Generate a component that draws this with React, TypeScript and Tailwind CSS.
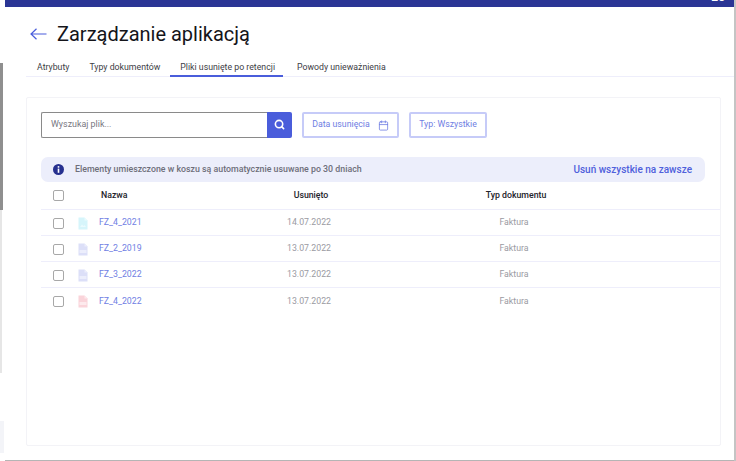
import React from "react";
import { Search, Calendar } from "lucide-react";

const rows = [
  { name: "FZ_4_2021", date: "14.07.2022", color: "#d6f5fb", mark: "#eafbfe", label: "" },
  { name: "FZ_2_2019", date: "13.07.2022", color: "#dcdff8", mark: "#eceefc", label: "ZIP" },
  { name: "FZ_3_2022", date: "13.07.2022", color: "#dcdff8", mark: "#eceefc", label: "ZIP" },
  { name: "FZ_4_2022", date: "13.07.2022", color: "#fad4da", mark: "#fdeaed", label: "PDF" },
];

function FileIcon({ color, mark, label }: { color: string; mark: string; label: string }) {
  return (
    <svg width="10" height="13" viewBox="0 0 10 13" className="block shrink-0">
      <path d="M0.5 0.5H6.5L9.5 3.5V12.5H0.5Z" fill={color} />
      <path d="M6.5 0.5L9.5 3.5H6.5Z" fill={mark} />
      {label === "" ? <path d="M2 10L4 7.5L5.5 9L6.5 8L8 10Z" fill={mark} /> : <rect x="1.5" y="7" width="7" height="3" fill={mark} />}
    </svg>
  );
}

function Checkbox() {
  return <span className="block h-[11px] w-[11px] rounded-[2px] border border-[#a8a8a8] bg-white" />;
}

export default function App() {
  return (
    <div className="flex h-[461px] w-[736px] overflow-hidden bg-white font-['Roboto',sans-serif]">
      <div className="flex w-[5px] shrink-0 flex-col bg-white">
        <div className="h-[63px]" />
        <div className="h-[147px] w-[3px] bg-[#8f8f8f]" />
        <div className="h-[163px] w-[2px] bg-[#e6e6e6]" />
        <div className="h-[48px]" />
        <div className="h-[32px] w-[4px] bg-[#f3f4f8]" />
      </div>
      <div className="flex min-w-0 flex-1 flex-col border-b border-[#b5b5b5]">
        <div className="flex h-[6.5px] shrink-0 justify-end overflow-hidden bg-[#2b3595] pr-[9px]">
          <span className="mt-[-10px] text-[12px] leading-[14px] font-medium text-white">20</span>
        </div>
        <div className="flex h-[40px] shrink-0 items-end pl-[25px]">
          <svg width="17" height="12" viewBox="0 0 17 12" fill="none" stroke="#4a5ddb" strokeWidth="1.2" className="mb-[7px] shrink-0">
            <path d="M16.5 6H1M6.5 0.7L1 6L6.5 11.3" />
          </svg>
          <h1 className="ml-[10px] text-[20px] leading-[26px] font-normal text-[#15151a]">Zarządzanie aplikacją</h1>
        </div>
        <div className="ml-[21px] mt-[11px] flex h-[19px] shrink-0 items-start border-b border-[#eeeefb] pt-[1px] text-[8.75px] leading-[17px] text-[#3d3d45]">
          <span className="pl-[11px]">Atrybuty</span>
          <span className="pl-[20px]">Typy dokumentów</span>
          <span className="ml-[10px] mt-[-1px] h-[19px] border-b-2 border-[#4a5ddb] pl-[10px] pr-[8px] pt-[1px]">Pliki usunięte po retencji</span>
          <span className="pl-[14px]">Powody unieważnienia</span>
        </div>
        <div className="mb-[14px] ml-[21px] mr-[13px] mt-[20px] flex flex-1 flex-col rounded-[2px] border border-[#f3f3f7] pl-[14px] pt-[14px]">
          <div className="flex h-[26px] items-stretch">
            <div className="flex w-[226px] items-center rounded-l-[2px] border border-r-0 border-[#8a8a8a] pl-[9px] pt-[1px] text-[8.9px] text-[#77777f]">
              Wyszukaj plik...
            </div>
            <div className="flex w-[25px] items-center justify-center rounded-r-[2px] bg-[#4a5ddb]">
              <Search className="h-[11px] w-[11px] text-white" strokeWidth={3.5} />
            </div>
            <div className="ml-[10px] flex w-[97px] items-center justify-center gap-[8px] rounded-[2px] border-2 border-[#c6cbf8] pt-[1px] text-[8.75px] text-[#6f7ee3]">
              Data usunięcia
              <Calendar className="h-[11px] w-[11px]" strokeWidth={1.75} />
            </div>
            <div className="ml-[10px] flex w-[78px] items-center justify-center rounded-[2px] border-2 border-[#c6cbf8] pt-[1px] text-[8.75px] text-[#6f7ee3]">
              Typ: Wszystkie
            </div>
          </div>
          <div className="mr-[15px] mt-[19px] flex h-[25px] items-center justify-between rounded-[7px] bg-[#eceefb] pl-[12px] pr-[13px]">
            <div className="flex items-center gap-[11px]">
              <svg width="11" height="11" viewBox="0 0 11 11" className="block shrink-0">
                <circle cx="5.5" cy="5.5" r="5.5" fill="#26308f" />
                <rect x="4.7" y="2.1" width="1.6" height="1.6" fill="#ffffff" />
                <rect x="4.7" y="4.6" width="1.6" height="4.2" fill="#ffffff" />
              </svg>
              <span className="pt-[1px] text-[8.8px] font-medium text-[#6e6e7a]">Elementy umieszczone w koszu są automatycznie usuwane po 30 dniach</span>
            </div>
            <span className="text-[10px] font-medium text-[#4f60dc]">Usuń wszystkie na zawsze</span>
          </div>
          <div className="grid h-[28px] grid-cols-[58px_158px_106px_304px_1fr] items-center border-b border-[#eeeefb] pt-[1px] text-[8.75px] font-medium text-[#22222a]">
            <span className="pl-[12px]"><Checkbox /></span>
            <span className="pl-[2px]">Nazwa</span>
            <span className="pl-[2px] text-center">Usunięto</span>
            <span className="pl-[2px] text-center">Typ dokumentu</span>
          </div>
          {rows.map((r, i) => (
            <div
              key={r.name}
              className={`grid h-[26px] grid-cols-[58px_158px_106px_304px_1fr] items-center pt-[2px] text-[8.75px] text-[#9a9aa2] ${i < 3 ? "border-b border-[#eeeefb]" : ""}`}
            >
              <span className="flex items-center pl-[12px]">
                <Checkbox />
                <span className="ml-[14px]"><FileIcon color={r.color} mark={r.mark} label={r.label} /></span>
              </span>
              <span className="text-[#6f7ee3]">{r.name}</span>
              <span className="pr-[2px] text-center">{r.date}</span>
              <span className="pr-[2px] text-center">Faktura</span>
            </div>
          ))}
        </div>
      </div>
      <div className="w-[2px] shrink-0 bg-[#c4c4c4]" />
    </div>
  );
}
